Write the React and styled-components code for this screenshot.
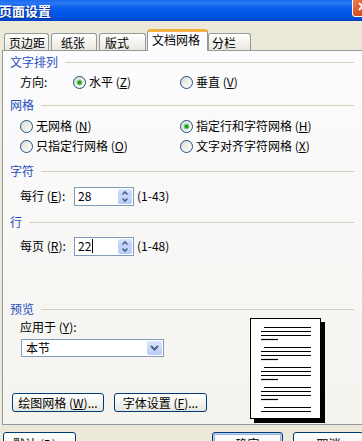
import React from 'react'
import styled, { createGlobalStyle } from 'styled-components'

const Global = createGlobalStyle`
  html, body { margin: 0; padding: 0; overflow: hidden; background: #ece9d8; }
`

const Dialog = styled.div`
  width: 378px;
  background: #ece9d8;
  font-family: "Noto Sans CJK SC", "Noto Sans", sans-serif;
  font-size: 12px;
  color: #000;
`

const TitleBar = styled.div`
  height: 21px;
  display: flex;
  align-items: center;
  justify-content: space-between;
  background: linear-gradient(to bottom, #1a68ee 0%, #2a7af6 15%, #0a5ceb 40%, #0054e3 75%, #0049d2 92%, #0040bb 100%);
`

const Title = styled.span`
  margin-left: -1px;
  color: #fff;
  font-weight: bold;
  font-size: 13px;
  line-height: 21px;
  text-shadow: 1px 1px 0 #0a2a8c;
`

const CloseBtn = styled.div`
  align-self: flex-start;
  box-sizing: border-box;
  width: 21px;
  height: 21px;
  margin-top: -4px;
  margin-right: 5px;
  border: 1px solid #fff;
  border-radius: 3px;
  background: linear-gradient(135deg, #f08a60 0%, #e0562c 45%, #c23c16 100%);
  display: flex;
  align-items: center;
  justify-content: center;
`

const TabStrip = styled.div`
  height: 29px;
  display: flex;
  align-items: flex-end;
  padding-left: 4px;
  position: relative;
  z-index: 1;
`

const Tab = styled.div`
  box-sizing: border-box;
  width: ${p => p.$w}px;
  margin-left: ${p => p.$ml}px;
  height: ${p => (p.$active ? 22 : 17)}px;
  margin-bottom: ${p => (p.$active ? -1 : 0)}px;
  padding-left: ${p => p.$pad}px;
  padding-top: ${p => (p.$active ? 0 : 1)}px;
  border: 1px solid #919b9c;
  border-bottom: none;
  border-top: ${p => (p.$active ? '3px solid #f5b040' : '1px solid #919b9c')};
  border-radius: 3px 3px 0 0;
  background: ${p => (p.$active ? '#fcfcfe' : 'linear-gradient(to bottom, #ffffff, #f0efea 70%, #e6e5de)')};
  line-height: 15px;
  white-space: nowrap;
`

const Panel = styled.div`
  box-sizing: border-box;
  width: 366px;
  height: 375px;
  margin-left: 2px;
  padding-top: 4px;
  border: 1px solid #919b9c;
  background: linear-gradient(to bottom, #fcfcfe, #f4f3ee);
`

const Heading = styled.div`
  display: flex;
  align-items: center;
  height: 14px;
  line-height: 14px;
  margin-top: ${p => p.$mt || 0}px;
  padding-left: 7px;
  margin-right: 13px;
  color: #1f4fbf;
  &::after {
    content: '';
    flex: 1;
    height: 1px;
    margin-left: 7px;
    background: #d0d0bf;
  }
`

const Row = styled.div`
  display: flex;
  align-items: center;
  height: 20px;
  margin-top: ${p => p.$mt || 0}px;
  padding-left: 17px;
`

const Cell = styled.div`
  width: 160px;
  display: flex;
  align-items: center;
`

const Label = styled.span`
  width: ${p => p.$w}px;
  white-space: nowrap;
  line-height: 14px;
`

const RadioWrap = styled.span`
  display: inline-flex;
  align-items: center;
  gap: 3px;
  white-space: nowrap;
  line-height: 14px;
`

const Mn = styled.span`
  text-decoration: underline;
`

const Input = styled.div`
  box-sizing: border-box;
  width: 60px;
  height: 19px;
  border: 1px solid #7f9db9;
  background: #fff;
  display: flex;
  align-items: center;
  padding-left: 3px;
`

const Value = styled.span`
  line-height: 14px;
  padding-right: 1px;
  border-right: ${p => (p.$caret ? '1px solid #000' : 'none')};
`

const Spinner = styled.div`
  margin-left: auto;
  margin-right: 1px;
  width: 14px;
  height: 15px;
  border-radius: 2px;
  background: linear-gradient(to bottom, #dbe5fd, #bccff8 50%, #c9d8fb 50%, #b6caf6);
  display: flex;
`

const Range = styled.span`
  margin-left: 3px;
  line-height: 14px;
`

const PreviewRow = styled.div`
  display: flex;
  align-items: flex-start;
  padding-left: 9px;
`

const LeftCol = styled.div`
  width: 196px;
  display: flex;
  flex-direction: column;
`

const ApplyLabel = styled.div`
  margin-top: 4px;
  margin-left: 8px;
  line-height: 14px;
`

const Select = styled.div`
  box-sizing: border-box;
  margin-top: 5px;
  margin-left: 9px;
  width: 143px;
  height: 18px;
  border: 1px solid #7f9db9;
  background: #fff;
  display: flex;
  align-items: center;
  padding-left: 4px;
  line-height: 14px;
`

const DropBtn = styled.div`
  margin-left: auto;
  margin-right: 1px;
  width: 15px;
  height: 14px;
  border-radius: 2px;
  background: linear-gradient(to bottom, #dbe5fd, #b9ccf7);
  display: flex;
  align-items: center;
  justify-content: center;
`

const ButtonRow = styled.div`
  display: flex;
  gap: ${p => p.$gap}px;
  margin-top: ${p => p.$mt}px;
  padding-left: ${p => p.$pl || 0}px;
`

const Button = styled.div`
  box-sizing: border-box;
  width: ${p => p.$w}px;
  height: ${p => p.$h}px;
  margin-left: ${p => p.$ml || 0}px;
  border: 1px solid #003c74;
  border-radius: 3px;
  background: linear-gradient(to bottom, #ffffff, #f3f3ef 60%, #e5e4dd);
  box-shadow: ${p => (p.$default ? 'inset 0 0 0 1px #bcd0f4, inset 0 0 0 2px #98b4e6' : 'none')};
  display: flex;
  align-items: center;
  justify-content: center;
  white-space: nowrap;
  line-height: 14px;
`

const PagePreview = styled.div`
  margin-left: 42px;
  margin-top: 2px;
  display: flex;
`

const Radio = ({ checked, children }) => (
  <RadioWrap>
    <svg width="13" height="13" viewBox="0 0 13 13">
      <defs>
        <linearGradient id="rfill" x1="0" y1="0" x2="1" y2="1">
          <stop offset="0" stopColor="#dcdcd5" />
          <stop offset="1" stopColor="#ffffff" />
        </linearGradient>
      </defs>
      <circle cx="6.5" cy="6.5" r="6" fill="url(#rfill)" stroke="#1c5180" />
      {checked && <circle cx="6.5" cy="6.5" r="3" fill="#8fd88f" />}
      {checked && <circle cx="6.5" cy="6.5" r="2" fill="#21a121" />}
    </svg>
    <span>{children}</span>
  </RadioWrap>
)

const Spin = () => (
  <Spinner>
    <svg width="14" height="15" viewBox="0 0 14 15">
      <polyline points="4.5,5.5 7,3 9.5,5.5" fill="none" stroke="#4d6185" strokeWidth="1.6" />
      <polyline points="4.5,9.5 7,12 9.5,9.5" fill="none" stroke="#4d6185" strokeWidth="1.6" />
    </svg>
  </Spinner>
)

const SpinField = ({ label, value, range, caret, mt }) => (
  <Row $mt={mt}>
    <Label $w={54}>{label}</Label>
    <Input>
      <Value $caret={caret}>{value}</Value>
      <Spin />
    </Input>
    <Range>{range}</Range>
  </Row>
)

const Page = () => {
  const lines = []
  for (let p = 0; p < 5; p++) {
    const base = 9 + p * 20
    const count = p === 4 ? 2 : 4
    for (let i = 0; i < count; i++) {
      const y = base + i * 4 + 0.5
      const x1 = i === 0 ? 14 : 11
      const x2 = i === 3 ? 28 : 61
      lines.push(<line key={`${p}-${i}`} x1={x1} y1={y} x2={x2} y2={y} stroke="#000" strokeWidth="1.2" />)
    }
  }
  return (
    <svg width="75" height="105" viewBox="0 0 75 105">
      <rect x="4" y="4" width="71" height="101" fill="#000" />
      <rect x="0.5" y="0.5" width="70" height="100" fill="#fff" stroke="#000" />
      {lines}
    </svg>
  )
}

const tabs = [
  { label: '页边距', w: 45, ml: 0, pad: 4 },
  { label: '纸张', w: 46, ml: 2, pad: 9 },
  { label: '版式', w: 47, ml: 2, pad: 5 },
  { label: '文档网格', w: 61, ml: 1, pad: 4, active: true },
  { label: '分栏', w: 43, ml: 0, pad: 3 },
]

const App = () => {
  return (
    <Dialog>
      <Global />
      <TitleBar>
        <Title>页面设置</Title>
        <CloseBtn>
          <svg width="11" height="11" viewBox="0 0 11 11">
            <path d="M2 2 L9 9 M9 2 L2 9" stroke="#fff" strokeWidth="2" />
          </svg>
        </CloseBtn>
      </TitleBar>

      <TabStrip>
        {tabs.map(t => (
          <Tab key={t.label} $w={t.w} $ml={t.ml} $pad={t.pad} $active={t.active}>
            {t.label}
          </Tab>
        ))}
      </TabStrip>

      <Panel>
        <Heading>文字排列</Heading>
        <Row $mt={3}>
          <Cell>
            <Label $w={53}>方向:</Label>
            <Radio checked>水平 (<Mn>Z</Mn>)</Radio>
          </Cell>
          <Cell>
            <Radio>垂直 (<Mn>V</Mn>)</Radio>
          </Cell>
        </Row>

        <Heading $mt={6}>网格</Heading>
        <Row $mt={4}>
          <Cell>
            <Radio>无网格 (<Mn>N</Mn>)</Radio>
          </Cell>
          <Cell>
            <Radio checked>指定行和字符网格 (<Mn>H</Mn>)</Radio>
          </Cell>
        </Row>
        <Row>
          <Cell>
            <Radio>只指定行网格 (<Mn>O</Mn>)</Radio>
          </Cell>
          <Cell>
            <Radio>文字对齐字符网格 (<Mn>X</Mn>)</Radio>
          </Cell>
        </Row>

        <Heading $mt={8}>字符</Heading>
        <SpinField mt={8} label={<>每行 (<Mn>E</Mn>):</>} value="28" range="(1-43)" />

        <Heading $mt={9}>行</Heading>
        <SpinField mt={7} label={<>每页 (<Mn>R</Mn>):</>} value="22" range="(1-48)" caret />

        <Heading $mt={46}>预览</Heading>
        <PreviewRow>
          <LeftCol>
            <ApplyLabel>应用于 (<Mn>Y</Mn>):</ApplyLabel>
            <Select>
              本节
              <DropBtn>
                <svg width="9" height="6" viewBox="0 0 9 6">
                  <polyline points="1,1 4.5,4.5 8,1" fill="none" stroke="#4d6185" strokeWidth="2" />
                </svg>
              </DropBtn>
            </Select>
            <ButtonRow $gap={10} $mt={36}>
              <Button $w={92} $h={19}>绘图网格 (<Mn>W</Mn>)...</Button>
              <Button $w={93} $h={19}>字体设置 (<Mn>F</Mn>)...</Button>
            </ButtonRow>
          </LeftCol>
          <PagePreview>
            <Page />
          </PagePreview>
        </PreviewRow>
      </Panel>

      <ButtonRow $gap={0} $mt={7} $pl={3}>
        <Button $w={73} $h={23}>默认 (<Mn>D</Mn>)...</Button>
        <Button $w={71} $h={23} $ml={136} $default>确定</Button>
        <Button $w={71} $h={23} $ml={10}>取消</Button>
      </ButtonRow>
    </Dialog>
  )
}

export default App
